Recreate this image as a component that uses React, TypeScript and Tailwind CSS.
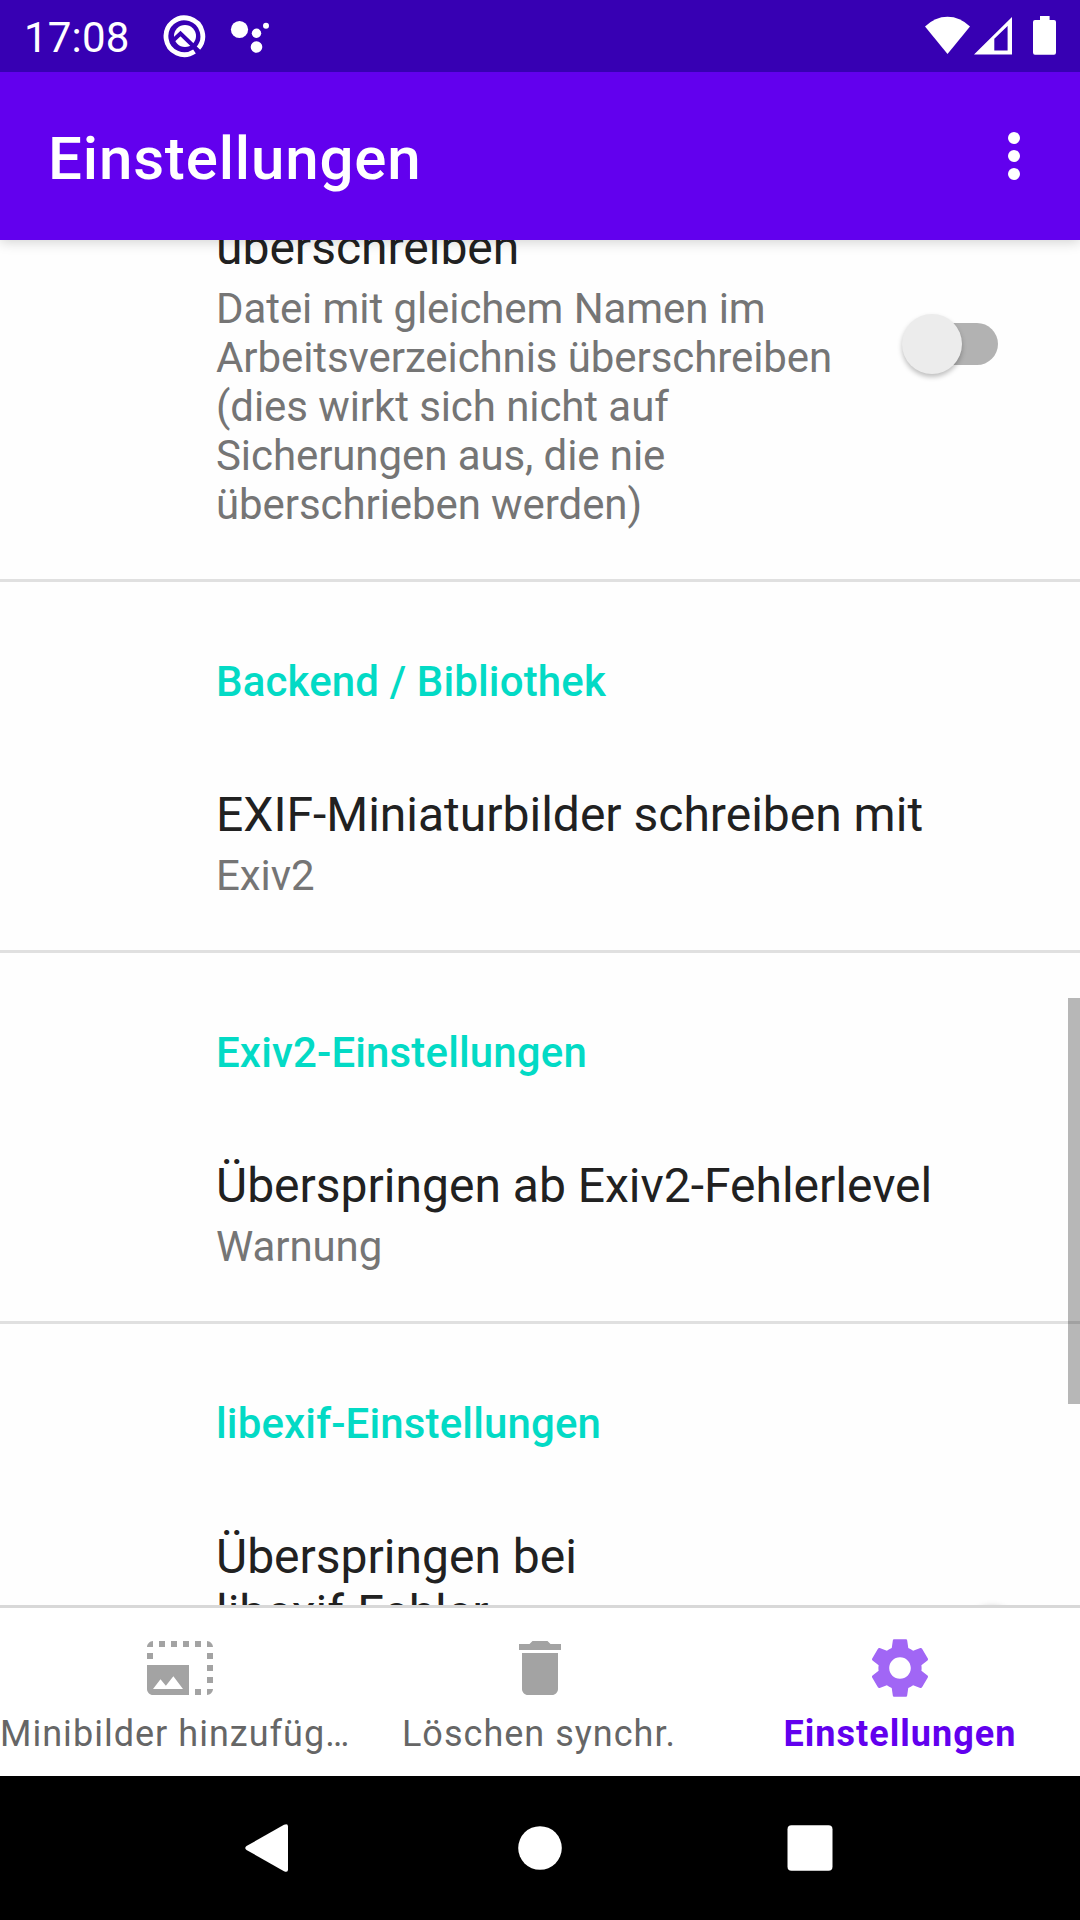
import React from "react";

const sections = [
  { category: "Backend / Bibliothek", title: "EXIF-Miniaturbilder schreiben mit", summary: "Exiv2" },
  { category: "Exiv2-Einstellungen", title: "Überspringen ab Exiv2-Fehlerlevel", summary: "Warnung" },
];

function StatusBar() {
  return (
    <div className="relative z-20 flex h-[72px] shrink-0 items-center bg-[#3700b3] text-white">
      <span className="ml-[24px] w-[138px] pt-[2px] text-[42px] leading-[49px] tracking-[0.2px]">17:08</span>
      <svg className="h-[46px] w-[46px]" viewBox="0 0 46 46" fill="none">
        <path d="M32.5 38.6A18.4 18.4 0 1 1 36 35.600" stroke="white" strokeWidth="4.8" />
        <circle cx="23" cy="23" r="11" fill="white" />
        <path d="M10 28.500L18.500 20.500L37 38.500" stroke="#3700b3" strokeWidth="4" />
      </svg>
      <svg className="ml-[22px] h-[46px] w-[42px]" viewBox="0 0 42 46" fill="white">
        <circle cx="9.5" cy="16.5" r="8.6" />
        <circle cx="26.5" cy="20.3" r="4.7" />
        <circle cx="26.5" cy="34" r="5.8" />
        <circle cx="36" cy="12.7" r="3" />
      </svg>
      <svg className="ml-auto mr-[24px] h-[72px] w-[131px]" viewBox="925 0 131 72" fill="white">
        <path d="M925 26.5Q935 16.7 947.5 16.7T970 26.5L947.5 54Z" />
        <path fillRule="evenodd" d="M974 54.5L1012 17V54.5ZM994.3 38.8V50.5H1007.6V26Z" />
        <path d="M1040 20V16H1049.6V20H1054Q1056 20 1056 22V52.5Q1056 54.7 1054 54.7H1035Q1033 54.7 1033 52.5V22Q1033 20 1035 20Z" />
      </svg>
    </div>
  );
}

function AppBar() {
  return (
    <div className="relative z-10 flex h-[168px] shrink-0 items-center justify-between bg-[#6200ee] pl-[48px] pr-[60px] text-white shadow-[0_2px_12px_rgba(0,0,0,0.18)]">
      <h1 className="pt-[5px] text-[60px] font-medium leading-[70px] tracking-[0.85px]">Einstellungen</h1>
      <div className="flex flex-col gap-[6px]">
        <i className="h-3 w-3 rounded-full bg-white" />
        <i className="h-3 w-3 rounded-full bg-white" />
        <i className="h-3 w-3 rounded-full bg-white" />
      </div>
    </div>
  );
}

function Category({ children }: { children: React.ReactNode }) {
  return (
    <h2 className="text-[42px] font-medium leading-[49px] tracking-[0.14px] text-[#03dac5]">{children}</h2>
  );
}

function Title({ children }: { children: React.ReactNode }) {
  return <h3 className="text-[48px] leading-[56px] text-[#212121]">{children}</h3>;
}

function Summary({ children }: { children: React.ReactNode }) {
  return (
    <p className="mt-[8px] text-[42px] leading-[49px] tracking-[-0.08px] text-[#757575]">{children}</p>
  );
}

function BottomNav() {
  return (
    <nav className="grid h-[171px] shrink-0 grid-cols-3 border-t-[3px] border-[#d8d8d8] bg-white text-[36px] leading-[42px] tracking-[1.02px] text-[#666666]">
      <div className="flex min-w-0 flex-col items-center pt-[24px]">
        <svg className="h-[72px] w-[72px]" viewBox="0 0 24 24" fill="#a3a3a3">
          <path d="M21 15h2v2h-2v-2zm0-4h2v2h-2v-2zm2 8h-2v2c1 0 2-1 2-2zM13 3h2v2h-2V3zm8 4h2v2h-2V7zm0-4v2h2c0-1-1-2-2-2zM1 7h2v2H1V7zm16-4h2v2h-2V3zm0 16h2v2h-2v-2zM3 3C2 3 1 4 1 5h2V3zm6 0h2v2H9V3zM5 3h2v2H5V3zm-4 8v8c0 1.100.9 2 2 2h12V11H1zm2 8l2.500-3.210 1.790 2.150 2.500-3.220L13 19H3z" />
        </svg>
        <span className="mt-[9px] self-start whitespace-nowrap">Minibilder hinzufüg…</span>
      </div>
      <div className="flex flex-col items-center pt-[24px]">
        <svg className="h-[72px] w-[72px]" viewBox="0 0 24 24" fill="#a3a3a3">
          <path d="M6 19c0 1.100.9 2 2 2h8c1.100 0 2-.9 2-2V7H6v12zM19 4h-3.500l-1-1h-5l-1 1H5v2h14V4z" />
        </svg>
        <span className="mt-[9px] mr-[2px] whitespace-nowrap">Löschen synchr.</span>
      </div>
      <div className="flex flex-col items-center pt-[24px]">
        <svg className="h-[72px] w-[72px]" viewBox="0 0 24 24" fill="#a166f5">
          <path d="M19.14,12.94c0.04-0.3,0.06-0.61,0.06-0.94c0-0.32-0.02-0.64-0.07-0.94l2.03-1.58c0.18-0.14,0.23-0.41,0.12-0.61l-1.92-3.32c-0.12-0.22-0.37-0.29-0.59-0.22l-2.39,0.96c-0.5-0.38-1.03-0.7-1.62-0.94L14.4,2.81c-0.04-0.24-0.24-0.41-0.48-0.41h-3.84c-0.24,0-0.43,0.17-0.47,0.41L9.25,5.35C8.66,5.59,8.12,5.92,7.63,6.29L5.24,5.33c-0.22-0.08-0.47,0-0.59,0.22L2.74,8.87C2.62,9.08,2.66,9.34,2.86,9.48l2.03,1.58C4.84,11.36,4.8,11.69,4.8,12s0.02,0.64,0.07,0.94l-2.03,1.58c-0.18,0.14-0.23,0.41-0.12,0.61l1.92,3.32c0.12,0.22,0.37,0.29,0.59,0.22l2.39-0.96c0.5,0.38,1.03,0.7,1.62,0.94l0.36,2.54c0.05,0.24,0.24,0.41,0.48,0.41h3.84c0.24,0,0.44-0.17,0.47-0.41l0.36-2.54c0.59-0.24,1.13-0.56,1.62-0.94l2.39,0.96c0.22,0.08,0.47,0,0.59-0.22l1.92-3.32c0.12-0.22,0.07-0.47-0.12-0.61L19.14,12.94zM12,15.6c-1.98,0-3.6-1.62-3.6-3.6s1.62-3.6,3.6-3.6s3.6,1.62,3.6,3.6S13.980,15.6,12,15.6z" />
        </svg>
        <span className="mt-[9px] whitespace-nowrap font-bold text-[#6200ee]">Einstellungen</span>
      </div>
    </nav>
  );
}

function SystemNav() {
  return (
    <div className="flex h-[144px] shrink-0 items-center justify-between bg-black px-[234px]">
      <svg className="h-[72px] w-[72px]" viewBox="0 0 72 72" fill="white">
        <path d="M12.500 34L50 12.800Q54 11 54 14.500V57.500Q54 61 50 59.200L12.500 38Q10 36 12.500 34Z" />
      </svg>
      <svg className="h-[72px] w-[72px]" viewBox="0 0 72 72" fill="white">
        <circle cx="36" cy="36" r="21.800" />
      </svg>
      <svg className="h-[72px] w-[72px]" viewBox="0 0 72 72" fill="white">
        <rect x="13.500" y="13.300" width="45" height="45.500" rx="4" />
      </svg>
    </div>
  );
}

export default function App() {
  return (
    <div className="flex h-[1920px] w-[1080px] flex-col overflow-hidden bg-[#fefefe] font-[Roboto,sans-serif]">
      <StatusBar />
      <AppBar />
      <main className="relative min-h-0 flex-1 overflow-hidden">
        <div className="-mt-[20px] flex h-[359px] pl-[216px]">
          <div className="w-[660px]">
            <Title>überschreiben</Title>
            <Summary>
              Datei mit gleichem Namen im
              <br />
              Arbeitsverzeichnis überschreiben
              <br />
              (dies wirkt sich nicht auf
              <br />
              Sicherungen aus, die nie
              <br />
              überschrieben werden)
            </Summary>
          </div>
          <div className="mt-[103px] ml-[32px] flex h-[42px] w-[90px] items-center rounded-full bg-[linear-gradient(90deg,transparent_30px,#b2b2b2_30px)]">
            <div className="-ml-[6px] h-[60px] w-[60px] rounded-full bg-[#ececec] shadow-[0_3px_5px_rgba(0,0,0,0.25)]" />
          </div>
        </div>
        {sections.map((s) => (
          <section key={s.category} className="h-[371px] border-t-[3px] border-[#e0e0e0] pt-[75px] pl-[216px]">
            <Category>{s.category}</Category>
            <div className="mt-[81px]">
              <Title>{s.title}</Title>
              <Summary>{s.summary}</Summary>
            </div>
          </section>
        ))}
        <section className="border-t-[3px] border-[#e0e0e0] pt-[75px] pl-[216px]">
          <Category>libexif-Einstellungen</Category>
          <div className="mt-[81px] flex">
            <div className="w-[660px]">
              <Title>
                Überspringen bei
                <br />
                libexif-Fehler
              </Title>
            </div>
            <div className="mt-[77px] ml-[86px] h-[60px] w-[60px] rounded-full bg-[#6200ee] shadow-[0_1px_6px_rgba(0,0,0,0.25)]" />
          </div>
        </section>
        <div className="absolute top-[758px] right-0 h-[406px] w-3 bg-black/28" />
      </main>
      <BottomNav />
      <SystemNav />
    </div>
  );
}
